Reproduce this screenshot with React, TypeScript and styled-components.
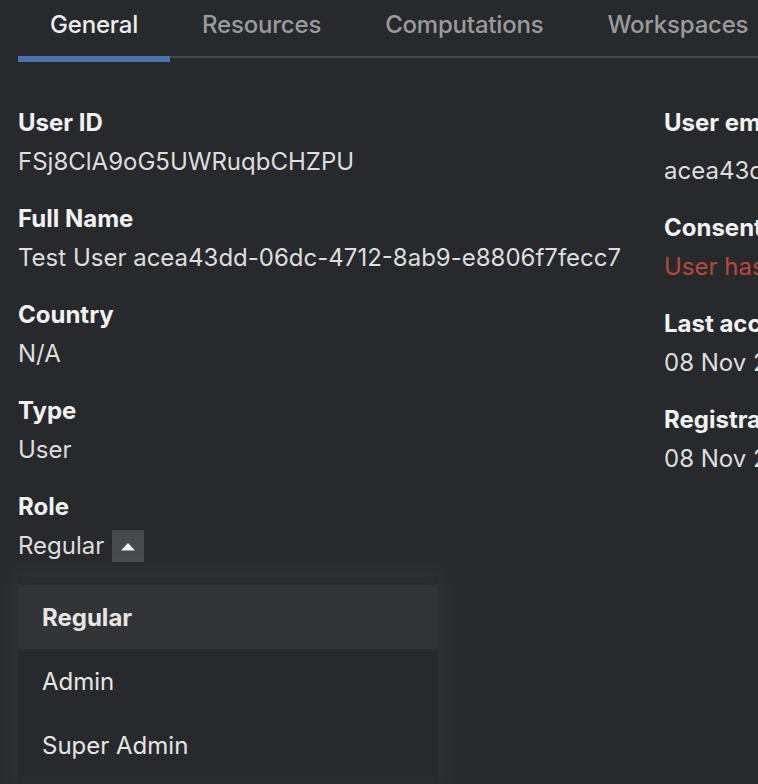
import { useState } from 'react'
import styled, { createGlobalStyle } from 'styled-components'

const GlobalStyle = createGlobalStyle`
  html, body {
    margin: 0;
    padding: 0;
    background: #28292c;
    overflow: hidden;
  }
  body {
    font-family: Inter, "Noto Sans", "Liberation Sans", sans-serif;
    color: #e6e6e6;
  }
`

const Page = styled.div`
  width: 1400px;
  min-height: 784px;
  background: #28292c;
`

const TabList = styled.div`
  display: flex;
  margin-left: 18px;
  border-bottom: 2px solid #48484b;
`

const Tab = styled.div<{ $active?: boolean }>`
  position: relative;
  height: 48px;
  padding: 0 32px 8px;
  display: flex;
  align-items: center;
  font-size: 24px;
  font-weight: 500;
  letter-spacing: -0.2px;
  color: ${p => (p.$active ? '#ececec' : '#9b9b9e')};

  ${p =>
		p.$active &&
		`
    &::after {
      content: '';
      position: absolute;
      left: 0;
      right: 0;
      top: 56px;
      height: 6px;
      background: #4b76ad;
    }
  `}
`

const Content = styled.div`
  display: grid;
  grid-template-columns: 646px 646px;
  padding: 49px 0 0 18px;
`

const Column = styled.div`
  display: flex;
  flex-direction: column;
  gap: 25px;
`

const Field = styled.div`
  position: relative;
  display: flex;
  flex-direction: column;
`

const Label = styled.div`
  font-size: 24px;
  font-weight: 700;
  line-height: 32px;
  color: #f2f2f2;
`

const Value = styled.div<{ $danger?: boolean; $offset?: number }>`
  display: flex;
  align-items: center;
  gap: 8px;
  margin-top: ${p => p.$offset ?? 7}px;
  font-size: 24px;
  line-height: 32px;
  white-space: nowrap;
  color: ${p => (p.$danger ? '#b8493b' : '#dedede')};
`

const ToggleButton = styled.button`
  width: 32px;
  height: 32px;
  padding: 0;
  border: none;
  background: #48494d;
  display: flex;
  align-items: center;
  justify-content: center;
  cursor: pointer;
`

const Menu = styled.ul`
  position: absolute;
  top: 86px;
  left: 0;
  width: 420px;
  margin: 0;
  padding: 8px 0;
  list-style: none;
  background: #2a2b2e;
  box-shadow: 0 0 28px 10px rgba(255, 255, 255, 0.035);
  z-index: 10;
`

const MenuItem = styled.li<{ $selected?: boolean }>`
  height: 64px;
  display: flex;
  align-items: center;
  padding: 0 24px;
  font-size: 24px;
  font-weight: ${p => (p.$selected ? 700 : 400)};
  color: #e6e6e6;
  background: ${p => (p.$selected ? '#333437' : '#28292c')};
`

const tabs = ['General', 'Resources', 'Computations', 'Workspaces']
const roles = ['Regular', 'Admin', 'Super Admin']

export default function App() {
	const [activeTab, setActiveTab] = useState('General')
	const [role, setRole] = useState('Regular')
	const [open, setOpen] = useState(true)

	return (
		<Page>
			<GlobalStyle />
			<TabList>
				{tabs.map(t => (
					<Tab key={t} $active={t === activeTab} onClick={() => setActiveTab(t)}>
						{t}
					</Tab>
				))}
			</TabList>

			<Content>
				<Column>
					<Field>
						<Label>User ID</Label>
						<Value>FSj8ClA9oG5UWRuqbCHZPU</Value>
					</Field>
					<Field>
						<Label>Full Name</Label>
						<Value>Test User acea43dd-06dc-4712-8ab9-e8806f7fecc7</Value>
					</Field>
					<Field>
						<Label>Country</Label>
						<Value>N/A</Value>
					</Field>
					<Field>
						<Label>Type</Label>
						<Value>User</Value>
					</Field>
					<Field>
						<Label>Role</Label>
						<Value>
							{role}
							<ToggleButton onClick={() => setOpen(o => !o)}>
								<svg width='16' height='9' viewBox='0 0 16 9'>
									<path d={open ? 'M1 8.5 L8 1 L15 8.5 Z' : 'M1 0.5 L8 8 L15 0.5 Z'} fill='#f0f0f0' />
								</svg>
							</ToggleButton>
						</Value>
						{open && (
							<Menu>
								{roles.map(r => (
									<MenuItem
										key={r}
										$selected={r === role}
										onClick={() => {
											setRole(r)
											setOpen(false)
										}}
									>
										{r}
									</MenuItem>
								))}
							</Menu>
						)}
					</Field>
				</Column>

				<Column>
					<Field>
						<Label>User email</Label>
						<Value $offset={16}>acea43dd-06dc-4712-8ab9-e8806f7fecc7@example.com</Value>
					</Field>
					<Field>
						<Label>Consent</Label>
						<Value $danger>User has not given consent</Value>
					</Field>
					<Field>
						<Label>Last access</Label>
						<Value>08 Nov 2023, 10:24</Value>
					</Field>
					<Field>
						<Label>Registration date</Label>
						<Value>08 Nov 2023, 10:20</Value>
					</Field>
				</Column>
			</Content>
		</Page>
	)
}
